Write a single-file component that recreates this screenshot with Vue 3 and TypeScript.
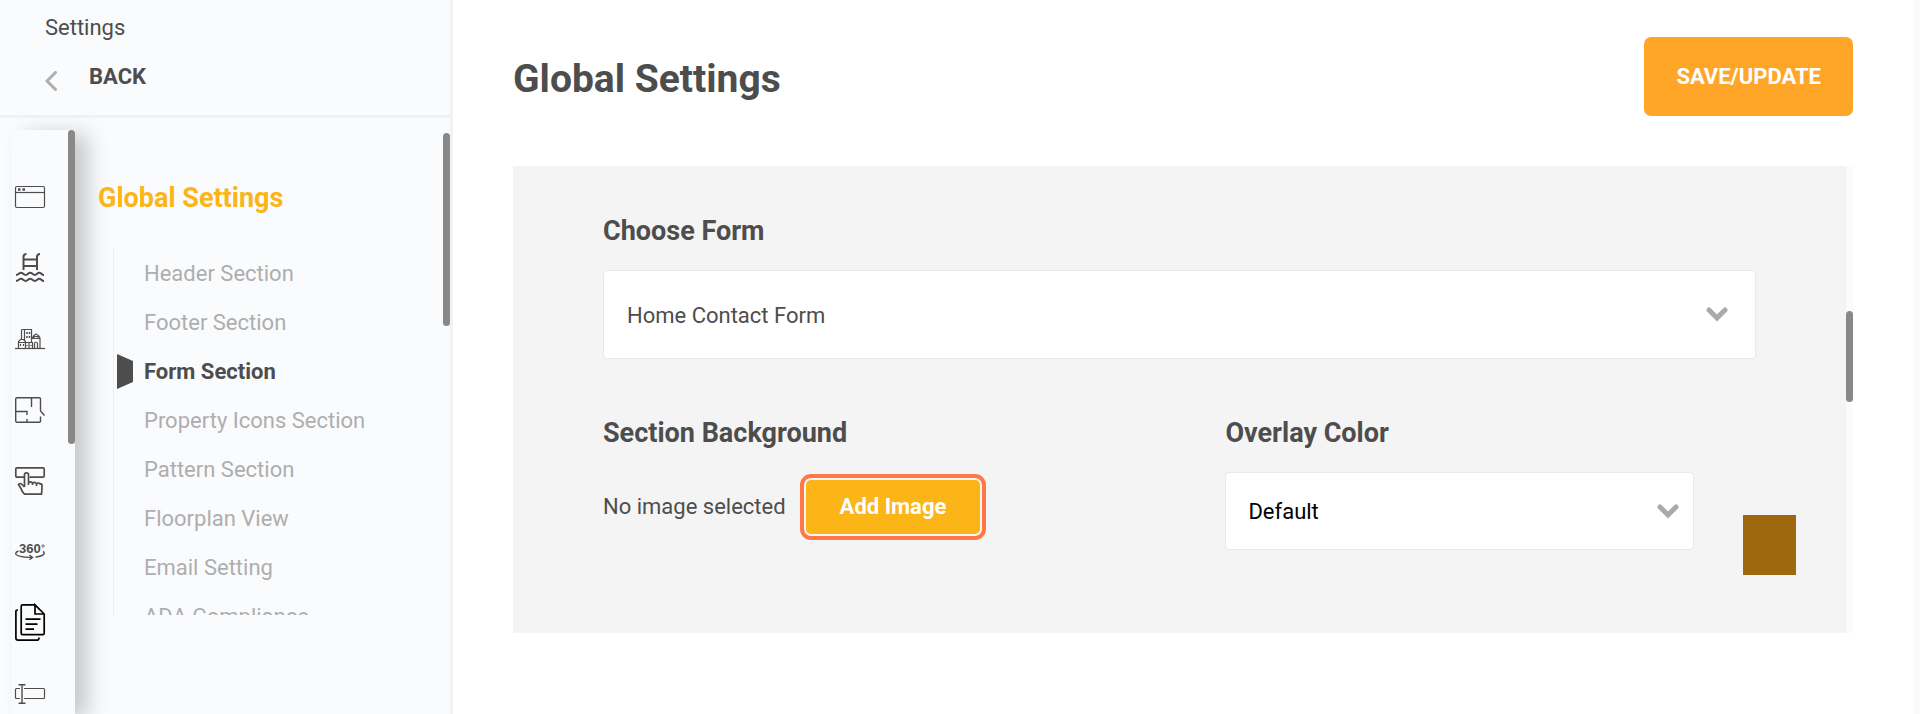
<script setup lang="ts">
import { ref } from 'vue'

const sections: string[] = [
  'Header Section',
  'Footer Section',
  'Form Section',
  'Property Icons Section',
  'Pattern Section',
  'Floorplan View',
  'Email Setting',
  'ADA Compliance',
]
const active = ref('Form Section')
const form = ref('Home Contact Form')
const overlay = ref('Default')
</script>

<template>
  <div class="app">
    <aside class="sidebar">
      <header class="side-head">
        <span class="crumb">Settings</span>
        <a class="back" href="#">
          <svg width="12" height="20" viewBox="0 0 12 20"><path d="M10.5 1.5 2 10l8.500 8.500" /></svg>
          <span>BACK</span>
        </a>
      </header>

      <div class="side-body">
        <div class="rail">
          <nav class="icons" aria-label="Modules">
            <a href="#" aria-label="Pages">
              <svg width="30" height="22" viewBox="0 0 30 22" stroke-width="1.200">
                <rect x=".5" y=".5" width="29" height="21" rx="1.500" />
                <path d="M.5 6.500h29" />
                <path d="M3 3.500h2.500M7.500 3.500H10" stroke-width="2.500" />
              </svg>
            </a>
            <a href="#" aria-label="Amenities">
              <svg width="30" height="30" viewBox="0 0 30 30" stroke-width="2">
                <path d="M8.500 17V4q0-3 3-3M22 17V4q0-3 3-3M8.500 6.500H22M8.500 13H22" />
                <path d="M1 22c2.500 0 3-2.300 5-2.300s2.500 2.300 4.700 2.300 2.500-2.300 4.500-2.300 2.500 2.300 4.600 2.300 2.500-2.300 4.500-2.300S26.500 22 29 22M1 28c2.500 0 3-2.300 5-2.300s2.500 2.300 4.700 2.300 2.500-2.300 4.500-2.300 2.500 2.300 4.600 2.300 2.500-2.300 4.500-2.300S26.500 28 29 28" />
              </svg>
            </a>
            <a href="#" aria-label="Community">
              <svg width="30" height="20" viewBox="0 0 30 20" stroke-width="1.200">
                <path d="M0 19.500h30" />
                <path d="M6.500 10V1.500q0-1 1-1h9V13M9.500.5V12" />
                <path d="M12 3v2M14.500 3v2M12 7v2M14.500 7v2" stroke-width="1.500" />
                <path d="M3.500 19v-6.500l2-2h3l2 2V19M3 13.500h8M5.500 15v2M8.500 15v2" />
                <path d="M10.500 13.500h7V19M14 14v5M12 16v1M16 16v1" />
                <path d="M17.500 9.500q0-2.500 3.500-4.500 4 2 4 4.500V19M16.500 9.500h9M19.500 19v-4q0-2 1.500-2t1.500 2v4M19 9V7.500h4V9" />
              </svg>
            </a>
            <a href="#" aria-label="Floorplans">
              <svg width="30" height="26" viewBox="0 0 30 26" stroke-width="1.400">
                <path d="M25.500 14V2q0-1.300-1.300-1.300H2Q.7.700.7 2v22q0 1.300 1.300 1.300h22.200q1.300 0 1.300-1.300v-4.500M25.500 14l4 4.500M16.500.7V10M.7 14.500H12V18M12 22v3" />
              </svg>
            </a>
            <a href="#" aria-label="Call to action">
              <svg width="30" height="28" viewBox="0 0 30 28" stroke-width="1.700">
                <path d="M9 10.200H2Q.8 10.200.8 9V2Q.8.800 2 .8h26q1.200 0 1.200 1.200v7q0 1.200-1.200 1.200H14.500" />
                <path d="M9.500 20V7.500q0-1.700 2-1.700t2 1.700V18v-2.500q2-1.500 4 .5V18v-2q2-1.500 4 .5V19v-2.500q2-1 4 .5 1.500-.5 1.500 1.500 0 4-.5 8.700H9.500L7 24q-.5-2-3.500-6.500Q5 15.500 7 17.500L9.500 20" />
              </svg>
            </a>
            <a href="#" aria-label="Virtual tour">
              <svg width="30" height="17" viewBox="0 0 30 17" stroke-width="1.400">
                <text x="4" y="9.500">360</text>
                <circle cx="28" cy="3" r="1.200" stroke-width=".8" />
                <path d="M3.500 8Q.7 9 .7 10.500.7 14 17 14.500M14.500 12l3 2.500-3 2.200M20.500 14q8-.8 8.700-3.500 0-1.500-1.200-2" />
              </svg>
            </a>
            <a href="#" aria-label="Documents" class="current">
              <svg width="30" height="37" viewBox="0 0 30 37" stroke-width="1.700">
                <path d="M20 .9H7.500Q6.200.9 6.200 2.200v27q0 1.500 1.500 1.500h20q1.500 0 1.500-1.500V10L20 .9V10h9.200" />
                <path d="M3 6H2.500Q.9 6 .9 7.600v26.500q0 2 2 2h19.600q1.500 0 1.500-2.500M10.500 15.200h15M10.500 20.200h12M10.500 25.200h8.500" />
              </svg>
            </a>
            <a href="#" aria-label="Form fields">
              <svg width="30" height="20" viewBox="0 0 30 20" stroke-width="1.200">
                <path d="M5 14.500H1.500q-1 0-1-1v-8q0-1 1-1H5M9 4.500h19.500q1 0 1 1v8q0 1-1 1H9" />
                <path d="M3.500.7h7M7 .7v18.600M3.500 19.300h7" stroke-width="1.400" />
              </svg>
            </a>
          </nav>
          <div class="track"><div class="thumb rail-thumb"></div></div>
        </div>

        <div class="sub">
          <div class="sub-main">
            <h2>Global Settings</h2>
            <ul>
              <li v-for="s in sections" :key="s">
                <a href="#" :class="{ on: s === active }" @click.prevent="active = s">{{ s }}</a>
              </li>
            </ul>
          </div>
          <div class="track"><div class="thumb sub-thumb"></div></div>
        </div>
      </div>
    </aside>

    <main>
      <header class="main-head">
        <h1>Global Settings</h1>
        <button type="button" class="save">SAVE/UPDATE</button>
      </header>

      <div class="panel">
        <div class="fields">
          <div class="choose">
            <label class="title" for="form">Choose Form</label>
            <div class="select">
              <select id="form" v-model="form"><option>Home Contact Form</option></select>
              <svg width="22" height="15" viewBox="0 0 22 15"><path d="M3 3l8 8 8-8" /></svg>
            </div>
          </div>
          <div class="cols">
            <div>
              <h3 class="title">Section Background</h3>
              <div class="image">
                <span>No image selected</span>
                <button type="button" class="add">Add Image</button>
              </div>
            </div>
            <div>
              <label class="title" for="overlay">Overlay Color</label>
              <div class="overlay">
                <div class="select small">
                  <select id="overlay" v-model="overlay"><option>Default</option></select>
                  <svg width="22" height="15" viewBox="0 0 22 15"><path d="M3 3l8 8 8-8" /></svg>
                </div>
                <button type="button" class="swatch" aria-label="Pick overlay color"></button>
              </div>
            </div>
          </div>
        </div>
        <div class="track"><div class="thumb panel-thumb"></div></div>
      </div>
    </main>
    <div class="edge"></div>
  </div>
</template>

<style>
body {
  margin: 0;
  background: #fff;
}
</style>

<style scoped>
* {
  box-sizing: border-box;
}
.app {
  display: flex;
  height: 100vh;
  overflow: hidden;
  color: #4d4d4d;
  font: 22px/28px Roboto, "Liberation Sans", sans-serif;
}
a {
  color: inherit;
  text-decoration: none;
}
h1, h2, h3, ul {
  margin: 0;
  padding: 0;
}
button, select {
  font: inherit;
  border: 0;
}
svg {
  display: block;
  fill: none;
  stroke: currentColor;
}
.sidebar {
  display: flex;
  flex-direction: column;
  flex: 0 0 453px;
  background: #fafbfd;
  border-right: 3px solid #f2f2f2;
}
.side-head {
  display: flex;
  flex-direction: column;
  gap: 21px;
  padding: 14px 45px 24px;
  border-bottom: 3px solid #f2f2f2;
}
.back {
  display: flex;
  gap: 32px;
  font-weight: 700;
}
.back svg {
  margin-top: 8px;
  color: #aeaeae;
  stroke-width: 3;
  stroke-linecap: round;
}
.side-body {
  display: flex;
  flex: 1;
  min-height: 0;
}
.rail {
  display: flex;
  width: 63px;
  margin: 12px 0 0 12px;
  background: #fafbfd;
  box-shadow: 13px 4px 20px rgba(0, 0, 0, 0.2);
}
.icons {
  flex: 1;
  padding: 31px 0 0 3px;
  overflow: hidden;
}
.icons a {
  display: flex;
  align-items: center;
  height: 71px;
}
.icons svg {
  flex: none;
  overflow: visible;
}
.icons .current {
  color: #000;
}
.icons text {
  fill: currentColor;
  stroke: none;
  font: 700 13px "Liberation Sans", sans-serif;
}
.track {
  flex: 0 0 7px;
}
.thumb {
  background: #888;
  border-radius: 4px;
}
.rail-thumb {
  height: 314px;
}
.sub {
  display: flex;
  flex: 1;
  padding-top: 15px;
}
.sub-main {
  flex: 1;
  padding: 47px 0 0 23px;
}
.sub-thumb {
  height: 193px;
}
h2 {
  color: #fcb516;
  font-size: 27px;
  line-height: 36px;
}
ul {
  height: 366px;
  margin: 33px 0 0 15px;
  border-left: 1px solid #eee;
  overflow: hidden;
  list-style: none;
}
li a {
  display: flex;
  align-items: center;
  height: 49px;
  padding-left: 30px;
  color: #aeaeae;
}
li a.on {
  padding-left: 3px;
  gap: 11px;
  color: #4d4d4d;
  font-weight: 700;
}
li a.on::before {
  content: "";
  width: 16px;
  height: 35px;
  background: #4d4d4d;
  clip-path: polygon(0 0, 100% 20%, 100% 80%, 0 100%);
}
main {
  flex: 1;
  padding: 37px 60px 0;
}
.main-head {
  display: flex;
  align-items: center;
  justify-content: space-between;
}
h1 {
  padding-top: 4px;
  font-size: 39px;
  line-height: 46px;
}
.save {
  padding: 26px 32px 25px;
  border-radius: 7px;
  background: #ffa629;
  color: #fff;
  font-weight: 700;
}
.panel {
  display: flex;
  margin-top: 50px;
  background: #fafbfd;
}
.fields {
  flex: 1;
  padding: 47px 50px 58px 90px;
  background: #f4f4f4;
}
.panel-thumb {
  height: 91px;
  margin-top: 145px;
}
.choose {
  margin-right: 40px;
}
.title {
  display: block;
  font-size: 27px;
  font-weight: 700;
  line-height: 36px;
}
.select {
  display: grid;
  flex: 1;
  align-items: center;
  margin-top: 21px;
}
.select > * {
  grid-area: 1 / 1;
}
.select select {
  width: 100%;
  padding: 31px 60px 28px 23px;
  appearance: none;
  border: 1px solid #e9e9e9;
  border-radius: 4px;
  background: #fff;
  color: inherit;
}
.select svg {
  justify-self: end;
  margin-right: 28px;
  color: #aaa;
  stroke-width: 5;
  stroke-linecap: round;
  pointer-events: none;
}
.select.small {
  margin-top: 0;
}
.small select {
  padding: 25px 40px 23px 22px;
  color: #000;
}
.small svg {
  margin-right: 15px;
}
.cols {
  display: grid;
  grid-template-columns: 12fr 11fr;
  margin-top: 56px;
}
.image {
  display: flex;
  align-items: center;
  gap: 20px;
  margin-top: 29px;
}
.add {
  padding: 13px 34px;
  border-radius: 5px;
  background: #fcb516;
  outline: 4px solid #ff7846;
  outline-offset: 2px;
  color: #fff;
  font-weight: 700;
}
.overlay {
  display: flex;
  align-items: flex-start;
  gap: 49px;
  margin-top: 21px;
}
.swatch {
  width: 53px;
  height: 60px;
  margin-top: 43px;
  background: #9d680e;
}
.edge {
  flex: 0 0 7px;
  background: #fafbfd;
}
</style>
